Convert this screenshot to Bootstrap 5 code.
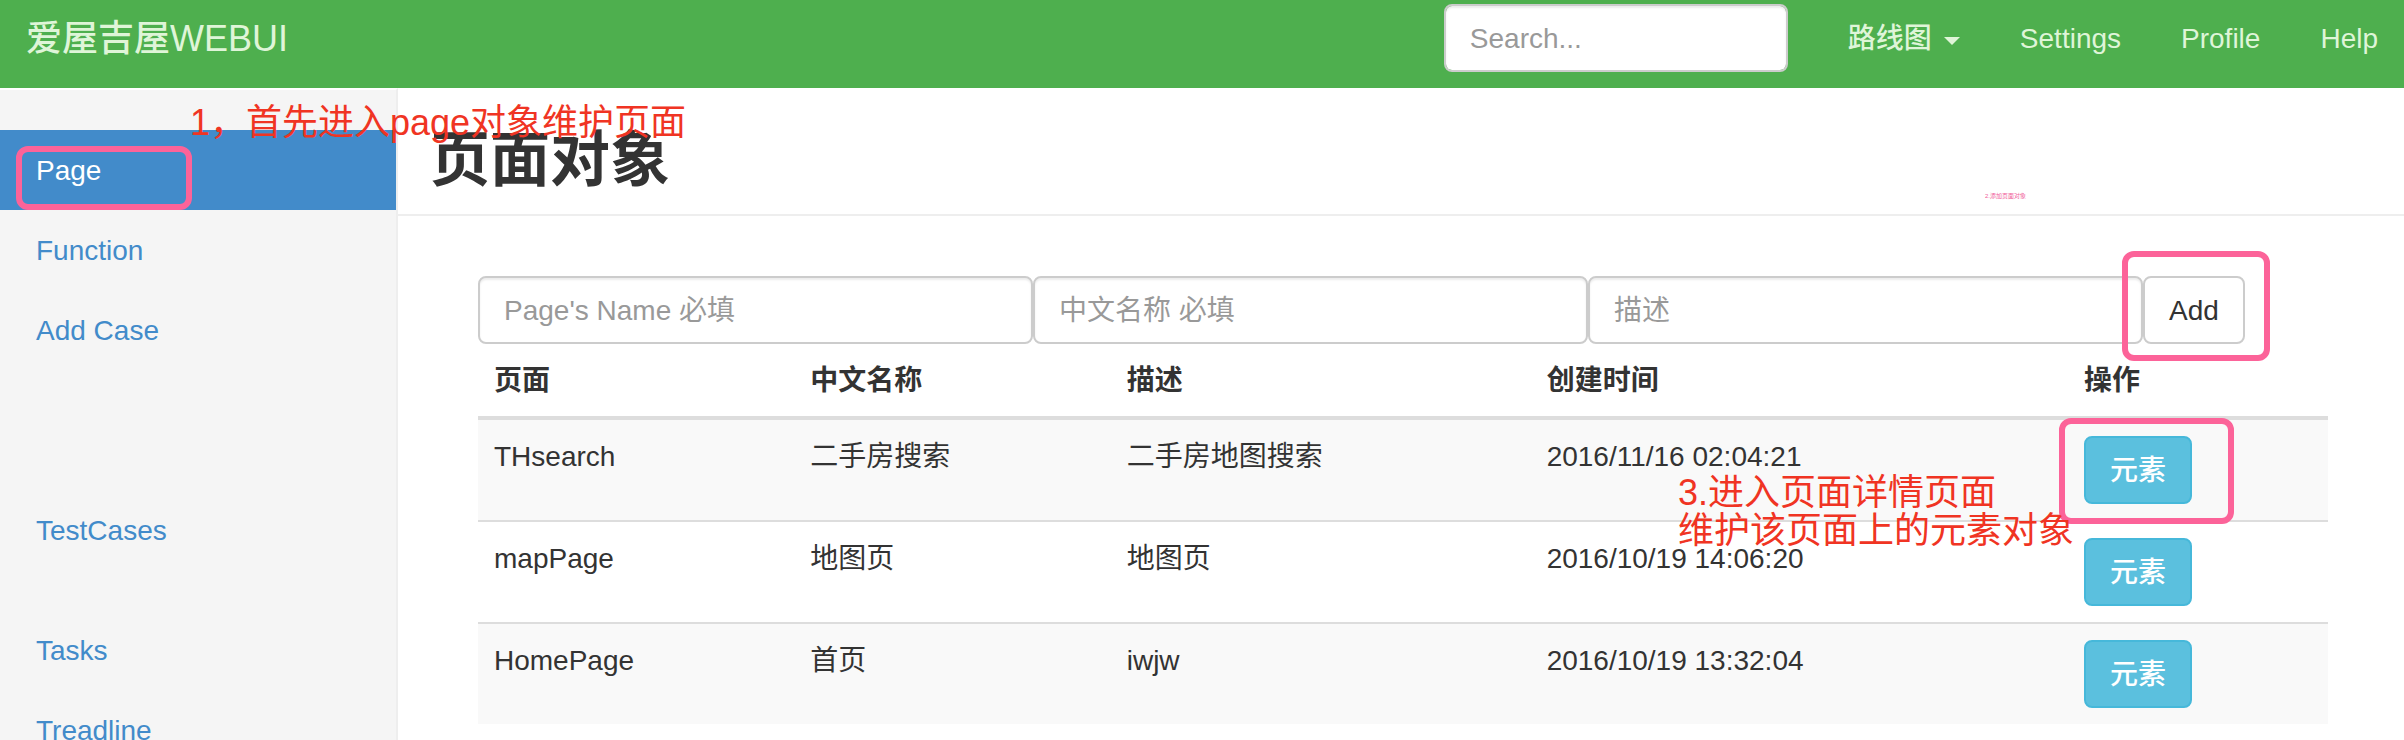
<!DOCTYPE html>
<html lang="zh-CN">
<head>
<meta charset="utf-8">
<meta name="viewport" content="width=device-width, initial-scale=1">
<title>爱屋吉屋WEBUI</title>
<link href="https://cdn.jsdelivr.net/npm/bootstrap@5.3.0/dist/css/bootstrap.min.css" rel="stylesheet">
<style>
  body {
    font-family: "Liberation Sans", "Noto Sans CJK SC", sans-serif;
    font-size: 28px;
    line-height: 42px;
    color: #333;
    background: #fff;
  }
  a { text-decoration: none; }
  .page-shell { height: 100vh; overflow: hidden; }

  .topbar { background: #4eaf4e; padding: 0 0 10px 26px; }
  .topbar .navbar-brand { font-size: 36px; line-height: 42px; padding: 18px 0; margin: 0; color: #dff5d8; font-weight: 500; }
  .topbar .navbar-nav .nav-link { color: #dff5d8; padding: 18px 30px; line-height: 42px; font-weight: 500; }
  .topbar .nav-end { margin-right: -4px; }
  .topbar .search-box { width: 344px; margin-right: 30px; }
  .topbar .dropdown-toggle { display: flex; align-items: center; gap: 12px; }
  .topbar .dropdown-toggle::after { margin: 4px 0 0; border-top: 8px solid; border-left: 8px solid transparent; border-right: 8px solid transparent; }

  .form-control {
    font-size: 28px; line-height: 42px; height: 68px; padding: 12px 24px 10px;
    color: #555; border: 2px solid #ccc; border-radius: 8px;
    box-shadow: inset 0 2px 2px rgba(0,0,0,.075);
  }
  .form-control::placeholder { color: #999; }
  .btn { font-size: 28px; line-height: 42px; padding: 12px 24px 10px; border-width: 2px; border-radius: 8px; }
  .btn-add { color: #333; background: #fff; border-color: #ccc; }
  .btn-element { color: #fff; background: #5bc0de; border-color: #46b8da; font-weight: 500; }

  .side { width: 398px; background: #f5f5f5; border-right: 2px solid #eee; border-top: 2px solid #fff; padding-top: 40px; }
  .side .nav { margin-bottom: 40px; flex-wrap: nowrap; }
  .side .nav-link { padding: 20px 36px 18px; line-height: 42px; color: #428bca; border-radius: 0; }
  .side .nav-link.active { color: #fff; background: #428bca; }
  .side .nav-late { margin-top: 120px; }

  .page-title { font-size: 60px; line-height: 66px; font-weight: 700; margin: 0; padding: 40px 32px 20px; border-bottom: 2px solid #eee; }
  .content-body { padding: 60px 76px 0 80px; }
  .field-cell { width: 30%; }

  .data-table { table-layout: fixed; width: 100%; margin: 0; color: #333; }
  .data-table th, .data-table td { padding: 16px; vertical-align: top; border: 0; border-top: 2px solid #ddd; color: #333; }
  .data-table thead th { border-top: 0; border-bottom: 4px solid #ddd; padding-bottom: 14px; }
  .data-table tbody tr:first-child td { border-top: 0; }
  .data-table tbody tr:nth-child(odd) td { background: #f9f9f9; }
  .col-name { width: 17.1%; } .col-desc { width: 22.7%; } .col-time { width: 29.05%; }

  .frame { position: absolute; border: 6px solid #fc6399; border-radius: 12px; pointer-events: none; z-index: 2; }
  .frame-page { left: 16px; top: 16px; width: 176px; height: 64px; }
  .frame-add { left: -21px; top: -25px; width: 148px; height: 110px; }
  .frame-element { left: -25px; top: -18px; width: 175px; height: 106px; }
  .note { position: absolute; z-index: 3; color: #f03423; font-size: 36px; line-height: 38px; white-space: nowrap; pointer-events: none; }
  .note-first { left: 190px; top: -26px; }
  .note-second { right: 378px; bottom: 14px; font-size: 6px; line-height: 12px; color: #f0609a; }
  .note-third { right: 100%; top: 38px; margin-right: 10px; }
</style>
</head>
<body>
<div class="page-shell d-flex flex-column">
  <nav class="topbar navbar navbar-expand align-items-start">
    <a class="navbar-brand" href="#">爱屋吉屋WEBUI</a>
    <div class="nav-end d-flex align-items-start ms-auto">
      <form class="search-box pt-1" role="search">
        <input class="form-control" type="search" placeholder="Search..." aria-label="Search">
      </form>
      <ul class="navbar-nav">
        <li class="nav-item dropdown"><a class="nav-link dropdown-toggle" href="#" role="button" data-bs-toggle="dropdown" aria-expanded="false">路线图</a></li>
        <li class="nav-item"><a class="nav-link" href="#">Settings</a></li>
        <li class="nav-item"><a class="nav-link" href="#">Profile</a></li>
        <li class="nav-item"><a class="nav-link" href="#">Help</a></li>
      </ul>
    </div>
  </nav>

  <div class="d-flex flex-grow-1">
    <aside class="side flex-shrink-0">
      <ul class="nav flex-column">
        <li class="nav-item position-relative">
          <a class="nav-link active" href="#" aria-current="page">Page</a>
          <span class="frame frame-page"></span>
          <span class="note note-first">1，首先进入page对象维护页面</span>
        </li>
        <li class="nav-item"><a class="nav-link" href="#">Function</a></li>
        <li class="nav-item"><a class="nav-link" href="#">Add Case</a></li>
      </ul>
      <ul class="nav nav-late flex-column">
        <li class="nav-item"><a class="nav-link" href="#">TestCases</a></li>
      </ul>
      <ul class="nav flex-column">
        <li class="nav-item"><a class="nav-link" href="#">Tasks</a></li>
        <li class="nav-item"><a class="nav-link" href="#">Treadline</a></li>
      </ul>
    </aside>

    <main class="flex-grow-1">
      <header class="position-relative">
        <h1 class="page-title">页面对象</h1>
        <span class="note note-second">2.添加页面对象</span>
      </header>
      <div class="content-body">
        <form class="d-flex">
          <div class="field-cell"><input class="form-control" type="text" placeholder="Page's Name 必填" aria-label="Page's Name"></div>
          <div class="field-cell"><input class="form-control" type="text" placeholder="中文名称 必填" aria-label="中文名称"></div>
          <div class="field-cell"><input class="form-control" type="text" placeholder="描述" aria-label="描述"></div>
          <div class="position-relative">
            <button class="btn btn-add" type="button">Add</button>
            <span class="frame frame-add"></span>
          </div>
        </form>
        <table class="table data-table">
          <colgroup><col class="col-name"><col class="col-name"><col class="col-desc"><col class="col-time"><col></colgroup>
          <thead>
            <tr><th scope="col">页面</th><th scope="col">中文名称</th><th scope="col">描述</th><th scope="col">创建时间</th><th scope="col">操作</th></tr>
          </thead>
          <tbody>
            <tr>
              <td>THsearch</td><td>二手房搜索</td><td>二手房地图搜索</td><td>2016/11/16 02:04:21</td>
              <td>
                <div class="position-relative d-flex">
                  <button class="btn btn-element" type="button">元素</button>
                  <span class="frame frame-element"></span>
                  <span class="note note-third">3.进入页面详情页面<br>维护该页面上的元素对象</span>
                </div>
              </td>
            </tr>
            <tr>
              <td>mapPage</td><td>地图页</td><td>地图页</td><td>2016/10/19 14:06:20</td>
              <td><div class="d-flex"><button class="btn btn-element" type="button">元素</button></div></td>
            </tr>
            <tr>
              <td>HomePage</td><td>首页</td><td>iwjw</td><td>2016/10/19 13:32:04</td>
              <td><div class="d-flex"><button class="btn btn-element" type="button">元素</button></div></td>
            </tr>
          </tbody>
        </table>
      </div>
    </main>
  </div>
</div>
<script src="https://cdn.jsdelivr.net/npm/bootstrap@5.3.0/dist/js/bootstrap.bundle.min.js"></script>
</body>
</html>
